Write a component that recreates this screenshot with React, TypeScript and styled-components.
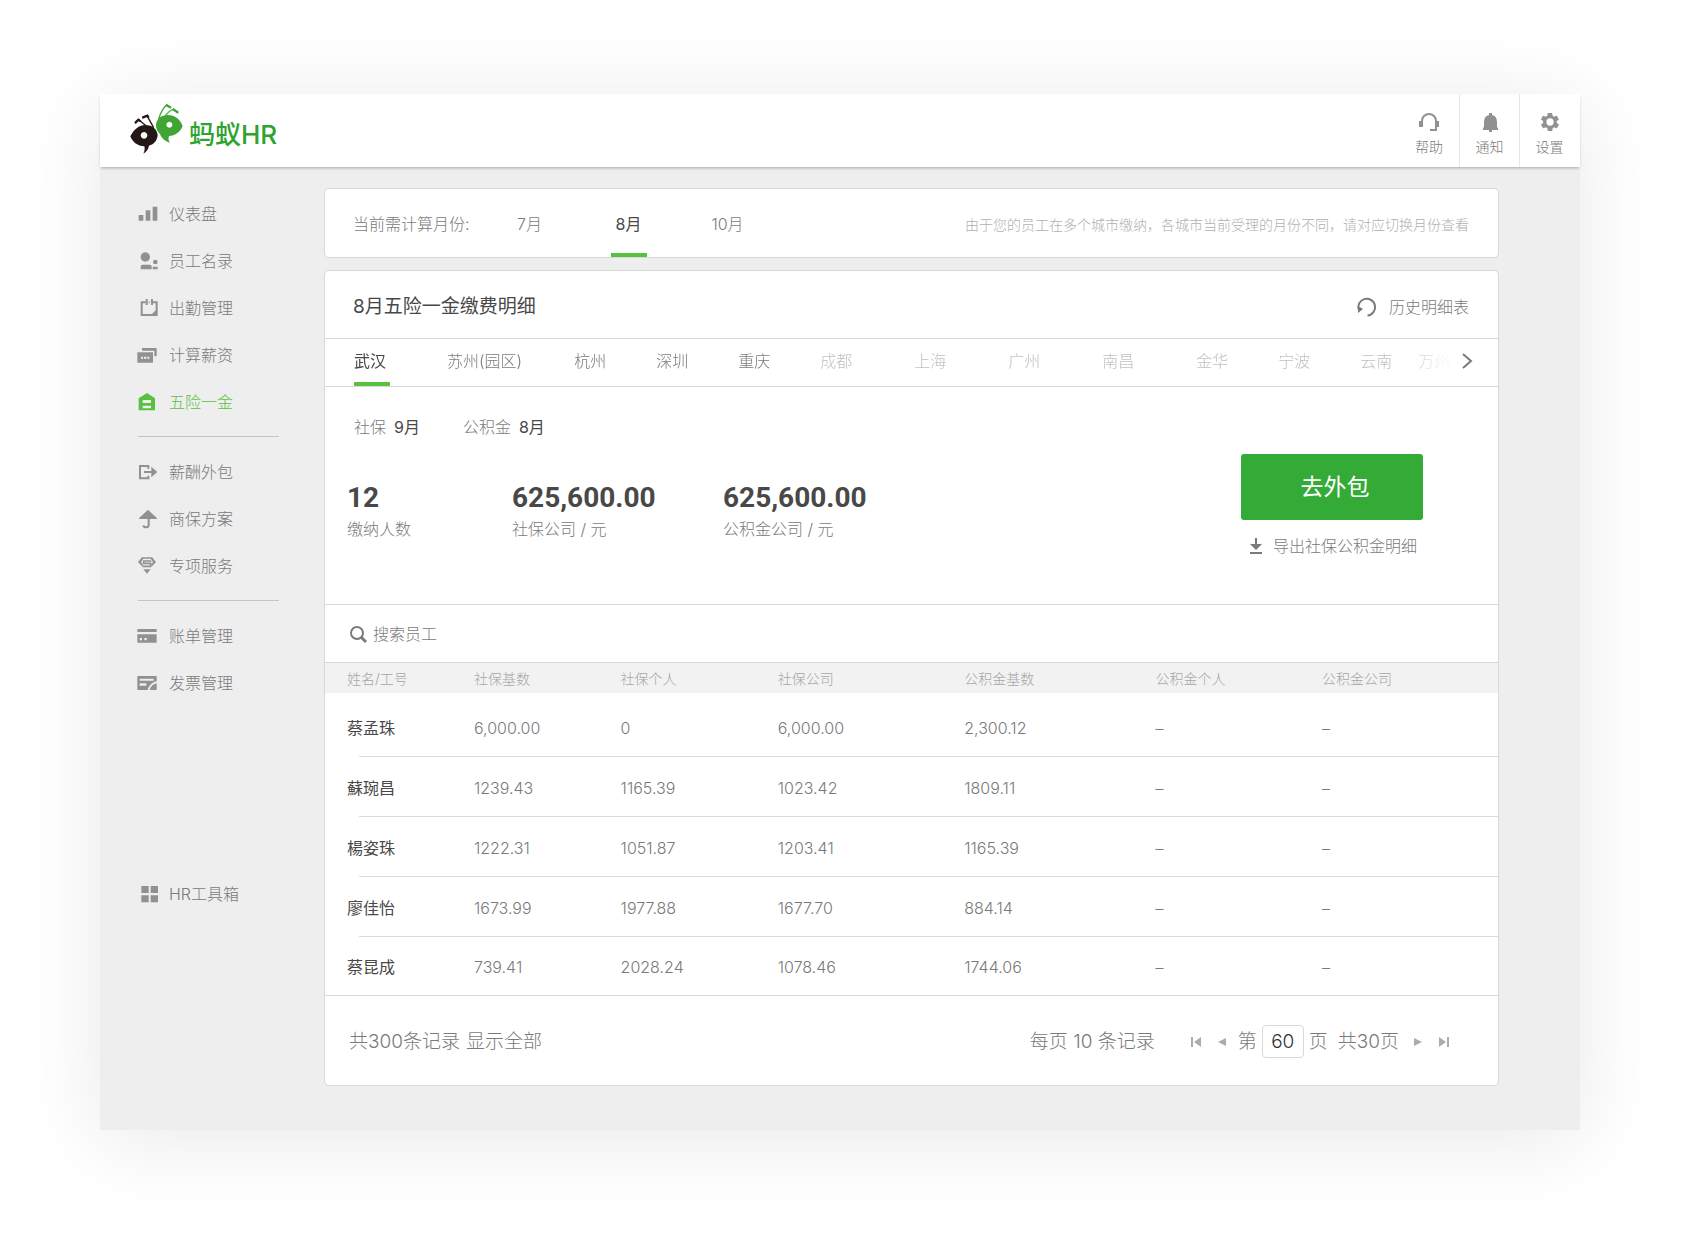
import React, { useState } from 'react';
import styled, { createGlobalStyle } from 'styled-components';

const color = {
  text: '#7a7a7a',
  strong: '#484848',
  muted: '#b0b0b0',
  faint: '#c0c0c0',
  icon: '#919191',
  line: '#d8d8d8',
  canvas: '#eeeeee',
  green: '#33ab36',
  leaf: '#58c140',
};

const GlobalStyle = createGlobalStyle`
  * { box-sizing: border-box; }
  body {
    margin: 0;
    background: #fff;
    color: ${color.text};
    font: 300 16px/24px Inter, "Noto Sans CJK SC", sans-serif;
  }
  button, input { font: inherit; color: inherit; }
  button { padding: 0; border: 0; background: none; cursor: pointer; }
  a { color: inherit; text-decoration: none; }
`;

const Page = styled.div`
  min-height: 100vh;
  padding: 94px 102px 108px 100px;
`;

const Shell = styled.div`
  background: ${color.canvas};
  box-shadow: 0 10px 80px rgba(0, 0, 0, 0.09);
`;

const Header = styled.header`
  display: flex;
  justify-content: space-between;
  height: 73px;
  background: #fff;
  box-shadow: 0 2px 3px -1px rgba(0, 0, 0, 0.3);
`;

const Brand = styled.a`
  display: flex;
  align-items: center;
  gap: 5px;
  padding: 0 0 4px 30px;
  color: #2fa32f;
  font-size: 26px;
  font-weight: 500;
`;

const BrandName = styled.span`
  padding-top: 12px;
`;

const HeaderActions = styled.div`
  display: flex;
  padding-right: 1px;
`;

const HeaderAction = styled.button`
  display: flex;
  flex-direction: column;
  align-items: center;
  gap: 5px;
  width: 60px;
  padding-top: 18px;
  font-size: 14px;
  line-height: 20px;
  svg { color: ${color.icon}; }
  & + & { border-left: 1px solid #e6e6e6; }
`;

const Body = styled.div`
  display: flex;
  align-items: flex-start;
`;

const Sidebar = styled.nav`
  flex: none;
  width: 224px;
  padding: 23px 45px 0 38px;
`;

const NavGroup = styled.ul<{ $lead: 'none' | 'rule' | 'space' }>`
  margin: ${p => ({ none: 0, rule: 11, space: 164 })[p.$lead]}px 0 0;
  padding: ${p => (p.$lead === 'rule' ? 11 : 0)}px 0 0;
  border-top: ${p => (p.$lead === 'rule' ? '1px solid #c4c4c4' : '0')};
  list-style: none;
`;

const NavLink = styled.a<{ $active?: boolean }>`
  display: flex;
  align-items: center;
  gap: 11px;
  height: 47px;
  color: ${p => (p.$active ? color.leaf : color.text)};
  svg { color: ${p => (p.$active ? color.leaf : color.icon)}; }
`;

const Main = styled.main`
  flex: 1;
  min-width: 0;
  display: flex;
  flex-direction: column;
  gap: 12px;
  padding: 21px 81px 44px 0;
`;

const Card = styled.section`
  background: #fff;
  border: 1px solid ${color.line};
  border-radius: 5px;
`;

const MonthBar = styled(Card)`
  display: flex;
  align-items: center;
  justify-content: space-between;
  height: 70px;
  padding: 0 29px 0 28px;
`;

const Months = styled.div`
  display: flex;
  align-items: center;
  align-self: stretch;
  gap: 63px;
`;

const MonthLabel = styled.span`
  padding-top: 2px;
  margin-right: -21px;
`;

const Tab = styled.button<{ $active?: boolean; $off?: boolean }>`
  align-self: stretch;
  flex: none;
  min-width: 36px;
  padding-top: 2px;
  border-top: 4px solid transparent;
  border-bottom: 4px solid ${p => (p.$active ? color.leaf : 'transparent')};
  color: ${p => (p.$active ? color.strong : p.$off ? color.faint : color.text)};
  font-weight: ${p => (p.$active ? 400 : 300)};
  white-space: nowrap;
`;

const Hint = styled.p`
  margin: 0;
  padding-top: 3px;
  color: ${color.muted};
  font-size: 14px;
`;

const CardHead = styled.div`
  display: flex;
  align-items: center;
  justify-content: space-between;
  height: 68px;
  padding: 4px 29px 0 28px;
  border-bottom: 1px solid ${color.line};
`;

const Title = styled.h1`
  margin: 0;
  color: ${color.strong};
  font-size: 19px;
  font-weight: 400;
`;

const IconLink = styled.a<{ $gap: number }>`
  display: flex;
  align-items: center;
  gap: ${p => p.$gap}px;
`;

const CityBar = styled.div`
  display: flex;
  height: 48px;
  padding: 0 24px 0 29px;
  border-bottom: 1px solid ${color.line};
`;

const CityList = styled.div`
  display: flex;
  flex: 1;
  min-width: 0;
  overflow: hidden;
  mask-image: linear-gradient(to left, transparent, #000 56px);
`;

const CityTab = styled(Tab)<{ $gap: number }>`
  margin-right: ${p => p.$gap}px;
  padding: 0 0 3px;
  text-align: left;
`;

const NextButton = styled.button`
  display: flex;
  align-items: center;
  justify-content: flex-end;
  flex: none;
  width: 20px;
  padding-bottom: 3px;
`;

const Summary = styled.div`
  display: flex;
  justify-content: space-between;
  height: 218px;
  padding: 28px 75px 0 22px;
  border-bottom: 1px solid ${color.line};
`;

const Periods = styled.dl`
  display: flex;
  gap: 43px;
  margin: 0;
  padding-left: 7px;
  div { display: flex; gap: 8px; }
  dd { margin: 0; color: ${color.strong}; font-weight: 400; }
`;

const Figures = styled.dl`
  display: flex;
  margin: 41px 0 0;
`;

const Figure = styled.div<{ $width: number }>`
  display: flex;
  flex-direction: column-reverse;
  width: ${p => p.$width}px;
  dd {
    margin: 0;
    color: ${color.strong};
    font: 700 28px/36px Roboto, sans-serif;
  }
  dt { line-height: 26px; }
`;

const Actions = styled.div`
  display: flex;
  flex-direction: column;
  align-items: center;
  gap: 14px;
  padding-top: 39px;
`;

const PrimaryButton = styled.button`
  width: 182px;
  height: 66px;
  padding-left: 6px;
  border-radius: 3px;
  background: ${color.green};
  color: #fff;
  font-size: 23px;
  font-weight: 400;
`;

const SearchBar = styled.label`
  display: flex;
  align-items: center;
  gap: 6px;
  height: 58px;
  padding: 0 24px;
  border-bottom: 1px solid ${color.line};
`;

const SearchInput = styled.input`
  flex: 1;
  padding: 0;
  border: 0;
  outline: 0;
  background: none;
  &::placeholder { color: ${color.text}; opacity: 1; }
`;

const Table = styled.table`
  width: 100%;
  table-layout: fixed;
  border-collapse: collapse;
  text-align: left;
  th, td { padding: 2px 0 0; font-weight: 300; }
  th:first-child, td:first-child { padding-left: 22px; }
  thead th {
    height: 30px;
    background: #f2f2f2;
    color: #a6a6a6;
    font-size: 14px;
  }
  tbody::before { content: ''; display: block; height: 4px; }
  tbody th { color: ${color.strong}; font-weight: 400; }
  tbody tr {
    height: 60px;
    background: linear-gradient(#dcdcdc, #dcdcdc) 34px 100% / 100% 1px no-repeat;
  }
  tbody tr:last-child { height: 58px; background: none; }
`;

const Col = styled.col<{ $share: number }>`
  width: ${p => p.$share}%;
`;

const Footer = styled.footer`
  display: flex;
  justify-content: space-between;
  align-items: center;
  height: 90px;
  padding: 2px 41px 0 24px;
  border-top: 1px solid ${color.line};
  font-size: 19px;
`;

const Totals = styled.div`
  display: flex;
  gap: 6px;
`;

const Pager = styled.div`
  display: flex;
  align-items: center;
`;

const PageSize = styled.span`
  margin-right: 28px;
`;

const PagerButton = styled.button`
  display: flex;
  justify-content: center;
  width: 26px;
  color: #acacac;
`;

const PageField = styled.label`
  display: flex;
  align-items: center;
  gap: 5px;
  margin: 0 10px 0 3px;
`;

const PageInput = styled.input`
  width: 42px;
  height: 33px;
  padding: 0;
  border: 1px solid ${color.line};
  border-radius: 4px;
  color: #333;
  text-align: center;
`;

const PageCount = styled.span`
  margin-right: 6px;
`;

type IconProps = { size?: number; box?: string; children: React.ReactNode };

const Svg = styled.svg`
  display: block;
  flex: none;
  overflow: visible;
`;

const Icon = ({ size = 20, box = '2 0 60 60', children }: IconProps) => (
  <Svg width={size} height={size} viewBox={box} fill="currentColor" aria-hidden="true">
    {children}
  </Svg>
);

const stroke = (width: number) => ({ fill: 'none', stroke: 'currentColor', strokeWidth: width });

const icons = {
  dashboard: <Icon><path d="M4 33h14v17H4zM25 19h14v31H25zM46 8h14v42H46z" /></Icon>,
  people: (
    <Icon>
      <circle cx="24" cy="18" r="14" />
      <path d="M10 55v-8q0-6 6-6h21q6 0 6 6v8zM46 47h15v8H46z" />
      <circle cx="54" cy="33" r="7" />
    </Icon>
  ),
  calendar: (
    <Icon>
      <path d="M25 13H13v38h45V13H46M34 13h3" {...stroke(6)} />
      <path d="M25 3h6v18h-6zM41 3h6v18h-6zM58 34v17H41z" />
    </Icon>
  ),
  payroll: (
    <Icon>
      <path fillRule="evenodd" d="M0 22h47v31H0zM11 35v6h6v-6zM20 35v6h7v-6zM30 35v6h6v-6z" />
      <path d="M14 9h44v25h-7V17H14z" />
    </Icon>
  ),
  house: <Icon><path fillRule="evenodd" d="M4 19 29 3l24 16v36H4zM16 24v9h25v-9zM16 41v8h25v-8z" /></Icon>,
  exportBox: (
    <Icon>
      <path d="M33 20v-8H8v37h25v-8M20 30h24" {...stroke(6)} />
      <path d="m42 14 18 16-18 16z" />
    </Icon>
  ),
  umbrella: (
    <Icon>
      <path d="M4 30 Q8 22 16 17L32 2l16 15q8 5 12 13z" />
      <path d="M34 29v19q0 7-7 7-8 0-9-6" {...stroke(6)} />
    </Icon>
  ),
  diamond: (
    <Icon>
      <path d="M14 4 2 18l12 13 3-5-6-8 7-10zM44 4l12 14-12 13-3-5 6-8-7-10zM18 40h22L29 53z" />
      <path d="M13 6h32M42 15H19v7h21v9H15" {...stroke(5)} />
    </Icon>
  ),
  bill: (
    <Icon>
      <path fillRule="evenodd" d="M0 9h58v9H0zM0 25h58v25H0zM7 36v7h7v-7zM21 36v7h7v-7z" />
    </Icon>
  ),
  invoice: (
    <Icon>
      <path fillRule="evenodd" d="M0 9h58v16Q38 28 31 51H0zM7 17v6h42v-6zM7 31v7h20v-7z" />
      <path d="M58 31v20H37q4-16 21-20z" />
    </Icon>
  ),
  grid: <Icon><path d="M12 6h22v21H12zM40 6h22v21H40zM12 34h22v21H12zM40 34h22v21H40z" /></Icon>,
  headset: (
    <Icon box="3 3 20 20">
      <path d="M6 15v-3a7 7 0 0 1 14 0v9h-6" {...stroke(2)} />
      <path d="M3 12h4v6H3zM19 12h4v6h-4z" />
    </Icon>
  ),
  bell: (
    <Icon box="0 0 20 20">
      <path d="M9 1h3v2q5 1 5 7v5l1 1v2h-6v2H9v-2H3v-2l1-1v-5q0-6 5-7z" />
    </Icon>
  ),
  gear: (
    <Icon box="1 1 22 22">
      <path d="M19.400 13a7.500 7.500 0 0 0 0-2l2.100-1.600a.5.5 0 0 0 .1-.6l-2-3.500a.5.5 0 0 0-.6-.2l-2.500 1a7.300 7.300 0 0 0-1.700-1l-.4-2.600a.5.5 0 0 0-.5-.4h-4a.5.5 0 0 0-.5.4L9 5.100a7.700 7.700 0 0 0-1.700 1l-2.500-1a.5.5 0 0 0-.6.2l-2 3.500a.5.5 0 0 0 .1.600L4.500 11a7.900 7.900 0 0 0 0 2l-2.100 1.600a.5.5 0 0 0-.1.600l2 3.500c.1.200.4.300.6.200l2.500-1a7.300 7.300 0 0 0 1.700 1l.4 2.600c0 .2.200.4.500.4h4c.3 0 .5-.2.500-.4l.4-2.600a7.700 7.700 0 0 0 1.700-1l2.500 1c.2.100.5 0 .6-.2l2-3.500a.5.5 0 0 0-.1-.6zM12 16a4 4 0 1 1 0-8 4 4 0 0 1 0 8z" />
    </Icon>
  ),
  history: (
    <Icon box="0 0 20 20">
      <path d="M2 13.500A8.400 8.400 0 1 1 10.500 18.500" {...stroke(2)} />
      <path d="M1 9v7l5-4z" />
    </Icon>
  ),
  next: <Icon size={18} box="0 0 18 18"><path d="m7 2 8 7-8 7" {...stroke(2)} /></Icon>,
  download: (
    <Icon size={18} box="0 0 18 18">
      <path d="M8 1h2v6h5l-6 6-6-6h5zM3 15h12v2H3z" />
    </Icon>
  ),
  search: (
    <Icon size={18} box="0 0 18 18">
      <circle cx="8" cy="8" r="6" {...stroke(2)} />
      <path d="m12 12 5 5" {...stroke(3)} />
    </Icon>
  ),
  first: <Icon size={10} box="0 0 10 10"><path d="M0 0h2v10H0zM10 0v10L3 5z" /></Icon>,
  prev: <Icon size={8} box="0 0 8 8"><path d="M8 0v8L0 4z" /></Icon>,
  following: <Icon size={8} box="0 0 8 8"><path d="M0 0v8l8-4z" /></Icon>,
  last: <Icon size={10} box="0 0 10 10"><path d="M8 0h2v10H8zM0 0v10l7-5z" /></Icon>,
};

const Logo = () => (
  <Svg width="54" height="52" viewBox="120 68 162 156" aria-hidden="true">
    <g fill="none" strokeWidth="4" strokeLinejoin="round">
      <path d="m168 136-22-18-10 11M191 142l-20-36-14 7" stroke="#231815" />
      <path d="M206 116q8-28 24-43l12 9M226 106q10-14 24-20l14 11" stroke="#3fa535" />
    </g>
    <g fill="none" strokeWidth="7">
      <path d="m135 128 10-10 7 5M157 112l15-6 4 6" stroke="#231815" />
      <path d="m228 74 15 8M249 87l16 10" stroke="#3fa535" />
    </g>
    <path
      fill="#231815"
      fillRule="evenodd"
      d="M121 168c10-20 26-34 45-34 21 0 35 12 37 31-2 18-13 28-26 31-2 10-8 19-17 24 4-8 5-15 3-22-20-1-35-12-42-30zM162 155a10 10 0 1 0 .1 0z"
    />
    <path
      fill="#3fa535"
      fillRule="evenodd"
      d="M198 135c1-20 16-31 35-31 22 0 38 14 45 33-7 18-22 29-41 30-3 8-1 15 3 21-12-5-25-12-30-27-8-7-12-16-12-26zM238 124a9 9 0 1 0 .1 0z"
    />
  </Svg>
);

type NavItem = { label: string; icon: keyof typeof icons; active?: boolean };
type NavSection = { lead: 'none' | 'rule' | 'space'; items: NavItem[] };

const navSections: NavSection[] = [
  {
    lead: 'none',
    items: [
      { label: '仪表盘', icon: 'dashboard' },
      { label: '员工名录', icon: 'people' },
      { label: '出勤管理', icon: 'calendar' },
      { label: '计算薪资', icon: 'payroll' },
      { label: '五险一金', icon: 'house', active: true },
    ],
  },
  {
    lead: 'rule',
    items: [
      { label: '薪酬外包', icon: 'exportBox' },
      { label: '商保方案', icon: 'umbrella' },
      { label: '专项服务', icon: 'diamond' },
    ],
  },
  {
    lead: 'rule',
    items: [
      { label: '账单管理', icon: 'bill' },
      { label: '发票管理', icon: 'invoice' },
    ],
  },
  { lead: 'space', items: [{ label: 'HR工具箱', icon: 'grid' }] },
];

const months = ['7月', '8月', '10月'];

const cities = [
  { name: '武汉', gap: 57 },
  { name: '苏州(园区)', gap: 52 },
  { name: '杭州', gap: 46 },
  { name: '深圳', gap: 46 },
  { name: '重庆', gap: 46 },
  { name: '成都', gap: 58, off: true },
  { name: '上海', gap: 58, off: true },
  { name: '广州', gap: 58, off: true },
  { name: '南昌', gap: 58, off: true },
  { name: '金华', gap: 46, off: true },
  { name: '宁波', gap: 46, off: true },
  { name: '云南', gap: 22, off: true },
  { name: '万州', gap: 0, off: true },
];

const columns = [
  { title: '姓名/工号', share: 12.7 },
  { title: '社保基数', share: 12.5 },
  { title: '社保个人', share: 13.4 },
  { title: '社保公司', share: 15.9 },
  { title: '公积金基数', share: 16.3 },
  { title: '公积金个人', share: 14.2 },
  { title: '公积金公司', share: 15 },
];

const rows = [
  ['蔡孟珠', '6,000.00', '0', '6,000.00', '2,300.12', '–', '–'],
  ['蘇琬昌', '1239.43', '1165.39', '1023.42', '1809.11', '–', '–'],
  ['楊姿珠', '1222.31', '1051.87', '1203.41', '1165.39', '–', '–'],
  ['廖佳怡', '1673.99', '1977.88', '1677.70', '884.14', '–', '–'],
  ['蔡昆成', '739.41', '2028.24', '1078.46', '1744.06', '–', '–'],
];

const figures = [
  { value: '12', label: '缴纳人数', width: 165 },
  { value: '625,600.00', label: '社保公司 / 元', width: 211 },
  { value: '625,600.00', label: '公积金公司 / 元', width: 211 },
];

export default function App() {
  const [month, setMonth] = useState('8月');
  const [city, setCity] = useState('武汉');

  return (
    <>
      <GlobalStyle />
      <Page>
        <Shell>
          <Header>
            <Brand href="#">
              <Logo />
              <BrandName>蚂蚁HR</BrandName>
            </Brand>
            <HeaderActions>
              <HeaderAction type="button">{icons.headset}帮助</HeaderAction>
              <HeaderAction type="button">{icons.bell}通知</HeaderAction>
              <HeaderAction type="button">{icons.gear}设置</HeaderAction>
            </HeaderActions>
          </Header>
          <Body>
            <Sidebar>
              {navSections.map((section, i) => (
                <NavGroup key={i} $lead={section.lead}>
                  {section.items.map(item => (
                    <li key={item.label}>
                      <NavLink href="#" $active={item.active}>
                        {icons[item.icon]}
                        {item.label}
                      </NavLink>
                    </li>
                  ))}
                </NavGroup>
              ))}
            </Sidebar>
            <Main>
              <MonthBar>
                <Months>
                  <MonthLabel>当前需计算月份:</MonthLabel>
                  {months.map(m => (
                    <Tab key={m} type="button" $active={m === month} onClick={() => setMonth(m)}>
                      {m}
                    </Tab>
                  ))}
                </Months>
                <Hint>由于您的员工在多个城市缴纳，各城市当前受理的月份不同，请对应切换月份查看</Hint>
              </MonthBar>
              <Card>
                <CardHead>
                  <Title>8月五险一金缴费明细</Title>
                  <IconLink href="#" $gap={12}>{icons.history}历史明细表</IconLink>
                </CardHead>
                <CityBar>
                  <CityList>
                    {cities.map(c => (
                      <CityTab
                        key={c.name}
                        type="button"
                        $gap={c.gap}
                        $active={c.name === city}
                        $off={c.off}
                        onClick={() => setCity(c.name)}
                      >
                        {c.name}
                      </CityTab>
                    ))}
                  </CityList>
                  <NextButton type="button" aria-label="更多城市">{icons.next}</NextButton>
                </CityBar>
                <Summary>
                  <div>
                    <Periods>
                      <div><dt>社保</dt><dd>9月</dd></div>
                      <div><dt>公积金</dt><dd>8月</dd></div>
                    </Periods>
                    <Figures>
                      {figures.map(f => (
                        <Figure key={f.label} $width={f.width}>
                          <dt>{f.label}</dt>
                          <dd>{f.value}</dd>
                        </Figure>
                      ))}
                    </Figures>
                  </div>
                  <Actions>
                    <PrimaryButton type="button">去外包</PrimaryButton>
                    <IconLink href="#" $gap={8}>{icons.download}导出社保公积金明细</IconLink>
                  </Actions>
                </Summary>
                <SearchBar>
                  {icons.search}
                  <SearchInput type="search" placeholder="搜索员工" aria-label="搜索员工" />
                </SearchBar>
                <Table>
                  <colgroup>
                    {columns.map(c => <Col key={c.title} $share={c.share} />)}
                  </colgroup>
                  <thead>
                    <tr>{columns.map(c => <th key={c.title} scope="col">{c.title}</th>)}</tr>
                  </thead>
                  <tbody>
                    {rows.map(([name, ...values]) => (
                      <tr key={name}>
                        <th scope="row">{name}</th>
                        {values.map((v, i) => <td key={i}>{v}</td>)}
                      </tr>
                    ))}
                  </tbody>
                </Table>
                <Footer>
                  <Totals>
                    <span>共300条记录</span>
                    <a href="#">显示全部</a>
                  </Totals>
                  <Pager>
                    <PageSize>每页 10 条记录</PageSize>
                    <PagerButton type="button" aria-label="首页">{icons.first}</PagerButton>
                    <PagerButton type="button" aria-label="上一页">{icons.prev}</PagerButton>
                    <PageField>
                      第
                      <PageInput type="text" defaultValue="60" />
                      页
                    </PageField>
                    <PageCount>共30页</PageCount>
                    <PagerButton type="button" aria-label="下一页">{icons.following}</PagerButton>
                    <PagerButton type="button" aria-label="末页">{icons.last}</PagerButton>
                  </Pager>
                </Footer>
              </Card>
            </Main>
          </Body>
        </Shell>
      </Page>
    </>
  );
}
